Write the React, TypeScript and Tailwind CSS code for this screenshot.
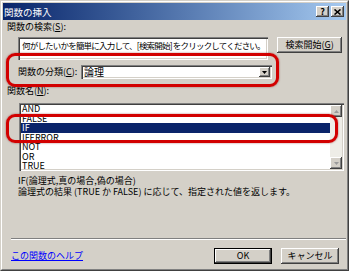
const items = ['AND', 'FALSE', 'IF', 'IFERROR', 'NOT', 'OR', 'TRUE']

const raised =
  'bg-[#D4D0C8] shadow-[inset_-1px_-1px_0_#404040,inset_1px_1px_0_#ffffff,inset_-2px_-2px_0_#808080]'
const sunken =
  'bg-white shadow-[inset_1px_1px_0_#808080,inset_2px_2px_0_#404040,inset_-1px_-1px_0_#ffffff,inset_-2px_-2px_0_#D4D0C8]'

function Arrow({ up }: { up?: boolean }) {
  return (
    <svg width="5" height="3" viewBox="0 0 5 3">
      {up ? (
        <polygon points="0,3 5,3 2.5,0" fill="#9a9a9a" />
      ) : (
        <polygon points="0,0 5,0 2.5,3" fill="#9a9a9a" />
      )}
    </svg>
  )
}

export default function App() {
  return (
    <div className="w-[349px] h-[271px] relative overflow-hidden bg-[#D4D0C8] border border-l-[#D4D0C8] border-t-[#D4D0C8] border-r-[#404040] border-b-[#404040] font-['Noto_Sans_CJK_JP','Liberation_Sans',sans-serif] text-[9px] leading-[10px] text-black">
      <div className="h-full flex flex-col border border-l-white border-t-white border-r-[#808080] border-b-[#808080] p-px">
        {/* Title bar */}
        <div className="h-[17px] shrink-0 flex items-center justify-between pl-[1px] pr-[2px] bg-gradient-to-r from-[#0A246A] to-[#A6CAF0]">
          <span className="text-white text-[9.5px]">関数の挿入</span>
          <div className="flex gap-[2px]">
            <div className={`w-[13px] h-[11px] flex items-center justify-center text-[9px] font-bold leading-none ${raised}`}>?</div>
            <div className={`w-[13px] h-[11px] flex items-center justify-center ${raised}`}>
              <svg width="7" height="6" viewBox="0 0 7 6">
                <path d="M0.5 0.5 L6.5 5.5 M6.5 0.5 L0.5 5.5" stroke="#000" strokeWidth="1.6" />
              </svg>
            </div>
          </div>
        </div>

        {/* Body */}
        <div className="flex-1 flex flex-col px-[4px]">
          <div className="mt-[2px]">関数の検索(<span className="underline">S</span>):</div>

          <div className="mt-[5px] ml-[11px] flex items-start">
            <div className={`w-[254px] h-[23px] pl-[4px] pt-[3px] overflow-hidden whitespace-nowrap text-[8.5px] tracking-[-0.8px] ${sunken}`}>
              何がしたいかを簡単に入力して、[検索開始] をクリックしてください。
            </div>
            <div className={`ml-[9px] w-[66px] h-[16px] flex items-center justify-center ${raised}`}>
              検索開始(<span className="underline">G</span>)
            </div>
          </div>

          <div className="mt-[5px] ml-[11px] flex items-center">
            <div className="w-[63px]">関数の分類(<span className="underline">C</span>):</div>
            <div className={`w-[191px] h-[14px] flex items-center justify-between pl-[3px] pr-[2px] ${sunken}`}>
              <span className="text-[10px]">論理</span>
              <div className={`w-[11px] h-[10px] flex items-center justify-center ${raised}`}>
                <svg width="5" height="3" viewBox="0 0 5 3">
                  <polygon points="0,0 5,0 2.5,3" fill="#000" />
                </svg>
              </div>
            </div>
          </div>

          <div className="mt-[7px]">関数名(<span className="underline">N</span>):</div>

          <div className={`mt-[7px] ml-[12px] w-[325px] h-[68px] flex ${sunken}`}>
            <div className="flex-1 pt-[1px] pl-[2px] overflow-hidden">
              {items.map((it) => (
                <div
                  key={it}
                  className={`h-[9.5px] leading-[9.5px] pl-[1px] text-[9px] ${it === 'IF' ? 'bg-[#0A246A] text-white' : ''}`}
                >
                  {it}
                </div>
              ))}
            </div>
            <div className="w-[12px] my-[2px] mr-[2px] flex flex-col bg-[#EEEDE7]">
              <div className={`h-[12px] flex items-center justify-center ${raised}`}>
                <Arrow up />
              </div>
              <div className="flex-1" />
              <div className={`h-[12px] flex items-center justify-center ${raised}`}>
                <Arrow />
              </div>
            </div>
          </div>

          <div className="mt-[4px] ml-[11px] leading-[11px]">
            <div>IF(論理式,真の場合,偽の場合)</div>
            <div>論理式の結果 (TRUE か FALSE) に応じて、指定された値を返します。</div>
          </div>

          <div className="mt-[41px] ml-[4px] w-[335px] h-[2px] border-t border-t-[#808080] border-b border-b-white" />

          <div className="mt-[8px] flex items-center">
            <a className="ml-[4px] text-[#0000FF] underline">この関数のヘルプ</a>
            <div className={`ml-auto w-[58px] h-[16px] flex items-center justify-center border border-black ${raised}`}>
              OK
            </div>
            <div className={`ml-[9px] mr-[3px] w-[58px] h-[16px] flex items-center justify-center ${raised}`}>
              キャンセル
            </div>
          </div>
        </div>
      </div>

      {/* Red highlight marks */}
      <div className="absolute left-[5px] top-[52px] w-[273px] h-[34px] rounded-[9px] border-[3px] border-[#D20000] shadow-[0_0_2px_rgba(120,0,0,0.6)]" />
      <div className="absolute left-[5px] top-[113px] w-[332px] h-[29px] rounded-[9px] border-[3px] border-[#D20000] shadow-[0_0_2px_rgba(120,0,0,0.6)]" />
    </div>
  )
}
